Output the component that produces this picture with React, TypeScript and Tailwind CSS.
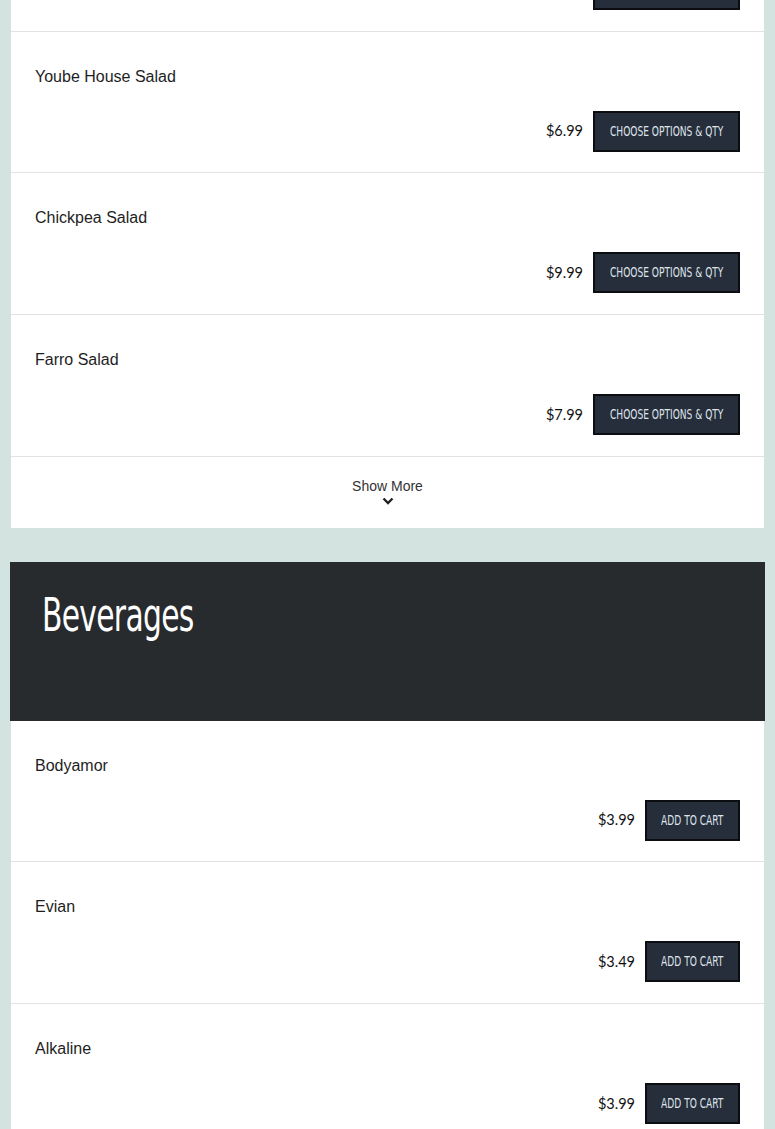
import React from 'react';

interface MenuItem {
  name: string;
  price: string;
  action: string;
}

const salads: MenuItem[] = [
  { name: 'Greek Salad', price: '$8.99', action: 'CHOOSE OPTIONS & QTY' },
  { name: 'Yoube House Salad', price: '$6.99', action: 'CHOOSE OPTIONS & QTY' },
  { name: 'Chickpea Salad', price: '$9.99', action: 'CHOOSE OPTIONS & QTY' },
  { name: 'Farro Salad', price: '$7.99', action: 'CHOOSE OPTIONS & QTY' },
];

const beverages: MenuItem[] = [
  { name: 'Bodyamor', price: '$3.99', action: 'ADD TO CART' },
  { name: 'Evian', price: '$3.49', action: 'ADD TO CART' },
  { name: 'Alkaline', price: '$3.99', action: 'ADD TO CART' },
];

const condensed = "font-['Liberation_Sans_Narrow','DejaVu_Sans_Condensed',sans-serif]";

const Row: React.FC<{ item: MenuItem }> = ({ item }) => {
  const wide = item.action.length > 12;
  return (
    <div className="border-b border-[#e2e2e2] px-6 pt-[33px] pb-[20.7px]">
      <div className="text-[16px] leading-6 text-[#1e1e1e] font-['Liberation_Sans',Arial,sans-serif]">
        {item.name}
      </div>
      <div className="mt-[22px] flex items-center justify-end gap-[10px]">
        <span className="text-[14.5px] text-[#111] font-['Lato',sans-serif]">{item.price}</span>
        <button
          className={`flex h-[41px] items-center justify-center border-2 border-[#0b0d10] bg-[#262e3b] ${
            wide ? 'w-[147px]' : 'w-[95px]'
          }`}
        >
          <span
            className={`inline-block scale-x-[0.72] whitespace-nowrap text-[14px] text-[#dfe3ea] ${condensed}`}
          >
            {item.action}
          </span>
        </button>
      </div>
    </div>
  );
};

export default function App() {
  return (
    <div className="min-h-[1129px] overflow-hidden bg-[#d3e3df] px-[10px]">
      <div className="-mt-[110px] mx-px bg-white">
        {salads.map((item) => (
          <Row key={item.name} item={item} />
        ))}
        <div className="flex h-[71px] flex-col items-center pt-[21px] font-['Liberation_Sans',Arial,sans-serif]">
          <span className="text-[14px] leading-4 text-[#333]">Show More</span>
          <svg width="12" height="8" viewBox="0 0 12 8" className="mt-[3px]">
            <path d="M1.5 1.5 L6 6 L10.5 1.5" fill="none" stroke="#222" strokeWidth="2.4" />
          </svg>
        </div>
      </div>

      <div className="mt-[34px] h-[159px] bg-[#282b2e] px-8 pt-[25px]">
        <h2
          className={`origin-left scale-x-[0.72] text-[46px] leading-[56px] tracking-[-1px] text-white ${condensed}`}
        >
          Beverages
        </h2>
      </div>

      <div className="mx-px bg-white">
        {beverages.map((item) => (
          <Row key={item.name} item={item} />
        ))}
      </div>
    </div>
  );
}
